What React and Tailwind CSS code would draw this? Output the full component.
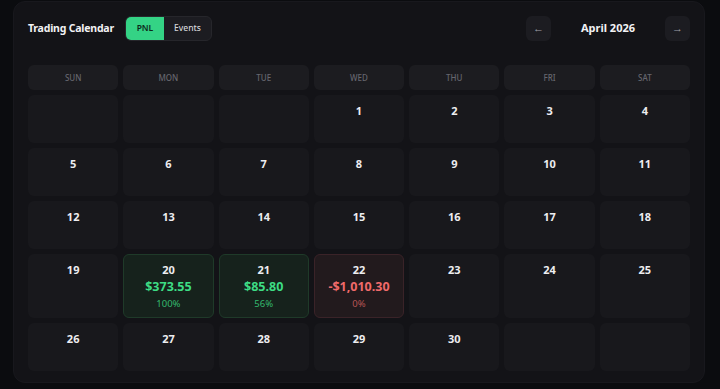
const days = ["SUN", "MON", "TUE", "WED", "THU", "FRI", "SAT"];

const pnl = {
  20: { amount: "$373.55", pct: "100%", win: true },
  21: { amount: "$85.80", pct: "56%", win: true },
  22: { amount: "-$1,010.30", pct: "0%", win: false },
};

// April 2026 starts on Wednesday
const cells = [...Array(3).fill(null), ...Array.from({ length: 30 }, (_, i) => i + 1)];
while (cells.length % 7) cells.push(null);

const DayCell = ({ day }) => {
  const trade = day ? pnl[day] : null;
  const tone = trade
    ? trade.win
      ? "bg-[#16221c] border-[#1f3a29]"
      : "bg-[#221a1d] border-[#3a2328]"
    : "bg-[#18181c] border-transparent";
  return (
    <div className={`min-h-[48px] rounded-md border flex flex-col items-center pt-[8px] pb-[7px] ${tone}`}>
      {day && <span className="text-[11px] leading-[14px] font-bold text-[#ededf0]">{day}</span>}
      {trade && (
        <>
          <span className={`mt-[1px] text-[12.5px] leading-[17px] font-bold ${trade.win ? "text-[#3ddc84]" : "text-[#f06a6a]"}`}>
            {trade.amount}
          </span>
          <span className={`mt-[2px] text-[9.5px] leading-[13px] ${trade.win ? "text-[#34b86d]" : "text-[#b85454]"}`}>
            {trade.pct}
          </span>
        </>
      )}
    </div>
  );
};

const App = () => {
  return (
    <div className="w-[720px] h-[389px] bg-[#0b0c0f] overflow-hidden font-['Noto_Sans',sans-serif]">
      <div className="ml-[13px] mt-[1px] w-[692px] h-[382px] rounded-xl bg-[#131317] border border-[#18181d] px-[14px] pt-[14px]">
        <div className="flex items-center h-[25px]">
          <h1 className="text-[10.5px] tracking-[-0.2px] font-bold text-[#f2f2f4]">Trading Calendar</h1>
          <div className="ml-[11px] flex h-[25px] rounded-md bg-[#1c1c21] border border-[#26262b] overflow-hidden">
            <button className="w-[38px] bg-[#34d385] text-[8.5px] font-semibold text-[#0d2a1a]">PNL</button>
            <button className="w-[47px] text-[8.5px] font-medium text-[#d4d4d8]">Events</button>
          </div>
          <div className="ml-auto flex items-center">
            <button className="w-[25px] h-[25px] rounded-md bg-[#1c1c21] text-[11px] text-[#a1a1aa]">←</button>
            <span className="w-[114px] text-center text-[11px] font-bold text-[#f2f2f4]">April 2026</span>
            <button className="w-[25px] h-[25px] rounded-md bg-[#1c1c21] text-[11px] text-[#a1a1aa]">→</button>
          </div>
        </div>
        <div className="mt-[24px] grid grid-cols-7 gap-[5px]">
          {days.map((d) => (
            <div key={d} className="h-[25px] rounded-md bg-[#1c1c20] flex items-center justify-center text-[8px] font-medium text-[#66666e]">
              {d}
            </div>
          ))}
        </div>
        <div className="mt-[5px] grid grid-cols-7 gap-[5px]">
          {cells.map((d, i) => (
            <DayCell key={i} day={d} />
          ))}
        </div>
      </div>
    </div>
  );
};

export default App;
